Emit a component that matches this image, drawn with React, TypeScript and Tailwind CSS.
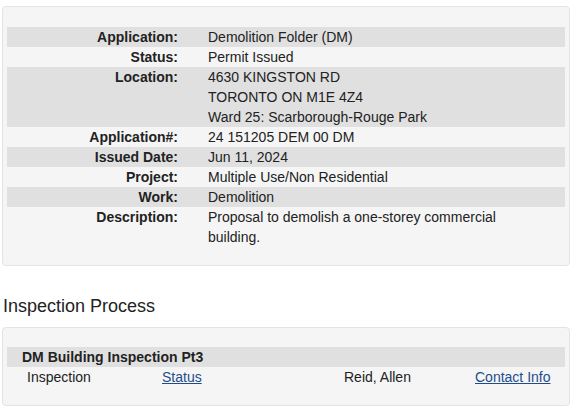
import React from 'react';

const rows: { label: string; lines: string[]; shaded: boolean }[] = [
  { label: 'Application:', lines: ['Demolition Folder (DM)'], shaded: true },
  { label: 'Status:', lines: ['Permit Issued'], shaded: false },
  { label: 'Location:', lines: ['4630 KINGSTON RD', 'TORONTO ON M1E 4Z4', 'Ward 25: Scarborough-Rouge Park'], shaded: true },
  { label: 'Application#:', lines: ['24 151205 DEM 00 DM'], shaded: false },
  { label: 'Issued Date:', lines: ['Jun 11, 2024'], shaded: true },
  { label: 'Project:', lines: ['Multiple Use/Non Residential'], shaded: false },
  { label: 'Work:', lines: ['Demolition'], shaded: true },
  { label: 'Description:', lines: ['Proposal to demolish a one-storey commercial building.'], shaded: false },
];

export default function App() {
  return (
    <div className="min-h-[412px] bg-white pt-[6px] text-[14px] leading-[20px] text-[#222] [font-family:'Liberation_Sans',Arial,sans-serif]">
      {/* permit details */}
      <div className="mx-[2px] rounded-[4px] border border-[#e3e3e3] bg-[#f5f5f5] px-[4px] pt-[20px] pb-[18px]">
        {rows.map((row) => (
          <div key={row.label} className={`flex ${row.shaded ? 'bg-[#e0e0e0]' : ''}`}>
            <div className="w-[171px] shrink-0 text-right font-bold">{row.label}</div>
            <div className="ml-[30px] w-[320px]">
              {row.lines.map((line) => (
                <div key={line}>{line}</div>
              ))}
            </div>
          </div>
        ))}
      </div>

      <h2 className="mt-[30px] ml-[3px] text-[18px] leading-[20px] font-normal">Inspection Process</h2>

      {/* inspections */}
      <div className="mx-[2px] mt-[11px] rounded-[4px] border border-[#e3e3e3] bg-[#f5f5f5] px-[4px] pt-[19px] pb-[18px]">
        <div className="bg-[#e0e0e0] pl-[15px] font-bold">DM Building Inspection Pt3</div>
        <div className="grid grid-cols-[135px_182px_131px_1fr] pl-[20px]">
          <span>Inspection</span>
          <a href="#" className="text-[#1f4d8c] underline">Status</a>
          <span>Reid, Allen</span>
          <a href="#" className="text-[#1f4d8c] underline">Contact Info</a>
        </div>
      </div>
    </div>
  );
}
